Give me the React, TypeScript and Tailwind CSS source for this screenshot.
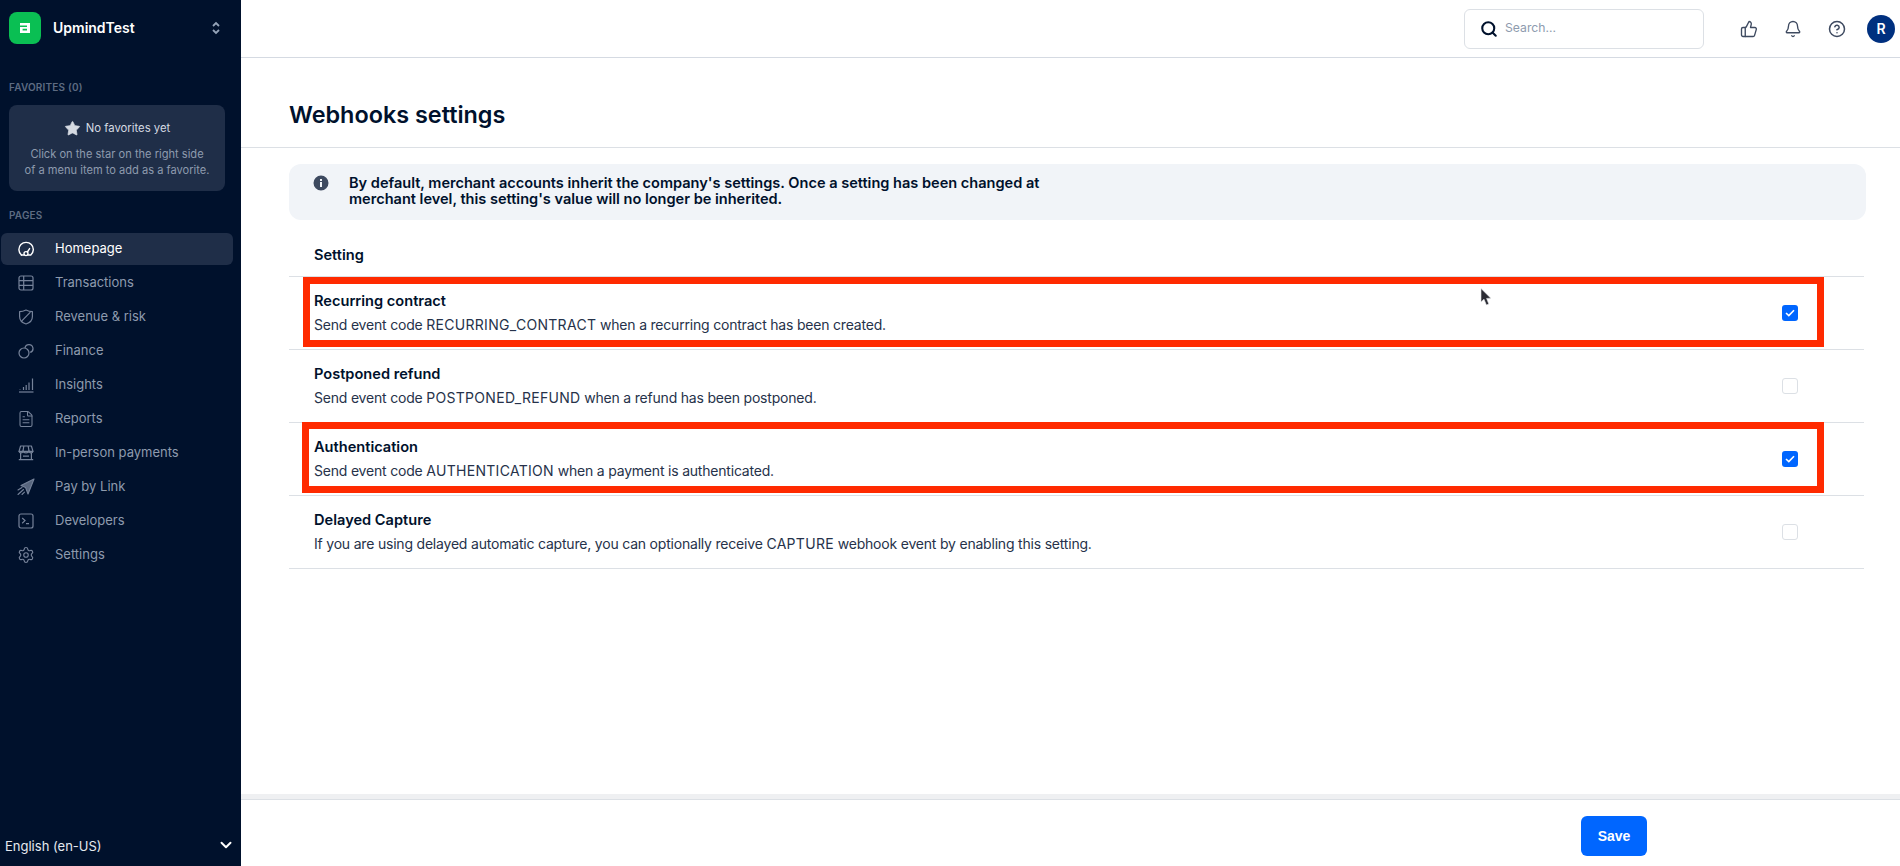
import { Bell, ChevronDown, CircleHelp, FileText, Search, Settings, Star, ThumbsUp } from 'lucide-react';
import type { ReactNode } from 'react';

// ---------------------------------------------------------------------------
// Hand drawn nav icons
// ---------------------------------------------------------------------------

function GaugeIcon() {
  return (
    <svg viewBox="0 0 16 16" className="h-4 w-4" fill="none" stroke="currentColor" strokeWidth="1.4">
      <path d="M3.4 14 A7.2 7.2 0 1 1 12.8 14 L10.2 14" strokeLinecap="round" />
      <circle cx="8" cy="12.6" r="2" />
      <path d="M9.4 11 L11.6 7.6" strokeLinecap="round" />
      <path d="M3.4 14 H5.8" strokeLinecap="round" />
    </svg>
  );
}

function TableIcon() {
  return (
    <svg viewBox="0 0 16 16" className="h-4 w-4" fill="none" stroke="currentColor" strokeWidth="1.2">
      <rect x="1" y="1" width="14" height="14" rx="2" />
      <path d="M1 5.7 H15 M1 10.3 H15 M5.7 1 V15" />
    </svg>
  );
}

function ShieldIcon() {
  return (
    <svg viewBox="0 0 16 16" className="h-4 w-4" fill="none" stroke="currentColor" strokeWidth="1.2">
      <path d="M1.6 2.6 C4 2.6 6 2 8 1 C10 2 12 2.6 14.4 2.6 V7.6 C14.4 11.2 11.6 14 8 15 C4.4 14 1.6 11.2 1.6 7.6 Z" strokeLinejoin="round" />
      <path d="M3.6 12.2 L12.4 3.2" />
    </svg>
  );
}

function FinanceIcon() {
  return (
    <svg viewBox="0 0 16 16" className="h-4 w-4" fill="none" stroke="currentColor" strokeWidth="1.2">
      <circle cx="6" cy="10" r="5" />
      <path d="M7 5.1 A4 4 0 1 1 12.2 9.4" />
    </svg>
  );
}

function InsightsIcon() {
  return (
    <svg viewBox="0 0 16 16" className="h-4 w-4" fill="none" stroke="currentColor" strokeWidth="1.2">
      <path d="M1 15 H15.5" />
      <path d="M2 13 V12.4 M5.5 13 V10 M8.2 13 V8 M11 13 V5.5 M14.5 13 V1.5" />
    </svg>
  );
}

function StoreIcon() {
  return (
    <svg viewBox="0 0 16 16" className="h-4 w-4" fill="none" stroke="currentColor" strokeWidth="1.2">
      <path d="M2.6 1 H13.4 L15 6.4 H1 Z" strokeLinejoin="round" />
      <path d="M5.8 1 L5 6.4 M10.2 1 L11 6.4" />
      <path d="M1 6.4 C1.6 8.4 4.4 8.4 5 6.4 C5.6 8.4 10.4 8.4 11 6.4 C11.6 8.4 14.4 8.4 15 6.4" />
      <path d="M2.6 8 V14.6 H13.4 V8 M0.8 14.6 H15.2 M5 11.2 H11" />
    </svg>
  );
}

function PlaneIcon() {
  return (
    <svg viewBox="0 0 18 18" className="h-[18px] w-[18px] -translate-x-[1px]" fill="none" stroke="currentColor" strokeWidth="1.1">
      <path d="M17 1 L4 7.4 L8.6 9.6 L11 16 Z" fill="currentColor" fillOpacity="0.75" strokeLinejoin="round" />
      <path d="M1 12 L5 9.5 M1 16.5 L6.5 11.5 M5 16.5 L7.5 14.2" strokeLinecap="round" />
    </svg>
  );
}

function TerminalIcon() {
  return (
    <svg viewBox="0 0 16 16" className="h-4 w-4" fill="none" stroke="currentColor" strokeWidth="1.2">
      <rect x="1" y="1" width="14" height="14" rx="2" />
      <path d="M4.2 5 L7 7.6 L4.2 10.2 M8 10.6 H11" />
    </svg>
  );
}

function AdyenMark() {
  return (
    <svg viewBox="0 0 12 12" className="h-3 w-3" fill="#ffffff">
      <path d="M1 1 H11 V11 H1 V5 H8 V3.4 H1 Z M3.6 6.8 V8.6 H8 V6.8 Z" fillRule="evenodd" />
    </svg>
  );
}

// ---------------------------------------------------------------------------
// Sidebar
// ---------------------------------------------------------------------------

const navItems: { label: string; icon: ReactNode; active?: boolean }[] = [
  { label: 'Homepage', icon: <GaugeIcon />, active: true },
  { label: 'Transactions', icon: <TableIcon /> },
  { label: 'Revenue & risk', icon: <ShieldIcon /> },
  { label: 'Finance', icon: <FinanceIcon /> },
  { label: 'Insights', icon: <InsightsIcon /> },
  { label: 'Reports', icon: <FileText className="-ml-[1px] h-[18px] w-[18px]" strokeWidth={1.4} /> },
  { label: 'In-person payments', icon: <StoreIcon /> },
  { label: 'Pay by Link', icon: <PlaneIcon /> },
  { label: 'Developers', icon: <TerminalIcon /> },
  { label: 'Settings', icon: <Settings className="-ml-[1px] h-[18px] w-[18px]" strokeWidth={1.5} /> },
];

function Sidebar() {
  return (
    <aside className="flex h-full w-[241px] shrink-0 flex-col bg-[#00112c]">
      <div className="flex h-[54px] items-center pl-[9px] pr-[20px] pt-[1px]">
        <div className="flex h-8 w-8 items-center justify-center rounded-lg bg-[#0abf53]">
          <AdyenMark />
        </div>
        <span className="ml-3 flex-1 text-sm font-semibold text-white">UpmindTest</span>
        <svg viewBox="0 0 10 14" className="h-[14px] w-[10px]" fill="none" stroke="#94a3b8" strokeWidth="1.8">
          <path d="M2 5 L5 2 L8 5 M2 9 L5 12 L8 9" />
        </svg>
      </div>
      <div className="mt-[26px] pl-[9px] text-[10px] font-semibold leading-[14px] tracking-[0.2px] text-[#5d6b82]">FAVORITES (0)</div>
      <div className="ml-[9px] mt-[11px] flex h-[86px] w-[216px] flex-col items-center rounded-lg bg-[#1f2e48] pt-[13px]">
        <div className="flex items-center gap-[5px] text-[11.3px] leading-[20px] text-[#d5dae2]">
          <Star className="h-[17px] w-[17px] fill-[#d5dae2]" strokeWidth={1} />
          No favorites yet
        </div>
        <p className="mt-[8px] text-center text-[11.1px] leading-[16px] text-[#8e9bae]">
          Click on the star on the right side
          <br />
          of a menu item to add as a favorite.
        </p>
      </div>
      <div className="mt-[17px] pl-[9px] text-[10px] font-semibold leading-[14px] tracking-[0.2px] text-[#5d6b82]">PAGES</div>
      <nav className="ml-[1px] mt-[11px] flex w-[232px] flex-col gap-[2px]">
        {navItems.map((item) => (
          <div
            key={item.label}
            className={
              item.active
                ? 'flex h-8 items-center rounded-md bg-[#1f2e48] pl-[17px] text-[13px] text-white'
                : 'flex h-8 items-center rounded-md pl-[17px] text-[13px] text-[#8e9bae]'
            }
          >
            <span className={item.active ? 'flex w-[37px] text-white' : 'flex w-[37px] text-[#76839a]'}>{item.icon}</span>
            {item.label}
          </div>
        ))}
      </nav>
      <div className="mt-auto flex h-10 items-start justify-between pl-[5px] pr-[6px] pt-[10px] text-[13px] text-[#e5e9ef]">
        <span className="leading-5">English (en-US)</span>
        <ChevronDown className="h-[18px] w-[18px] text-white" strokeWidth={2.6} />
      </div>
    </aside>
  );
}

// ---------------------------------------------------------------------------
// Top bar
// ---------------------------------------------------------------------------

function TopBar() {
  return (
    <header className="flex h-[58px] shrink-0 items-center border-b border-[#d5dae2] pl-[1223px]">
      <div className="flex h-10 w-[240px] items-center rounded-md border border-[#dce0e5] pl-[15px]">
        <Search className="h-[18px] w-[18px] text-[#00112c]" strokeWidth={2.8} />
        <span className="ml-[7px] text-[12.2px] text-[#8e9bae]">Search...</span>
      </div>
      <ThumbsUp className="ml-[36px] h-[18px] w-[18px] text-[#3e4a60]" strokeWidth={1.8} />
      <Bell className="ml-[26px] h-[18px] w-[18px] text-[#3e4a60]" strokeWidth={1.8} />
      <CircleHelp className="ml-[26px] h-[18px] w-[18px] text-[#3e4a60]" strokeWidth={2} />
      <div className="ml-[21px] flex h-7 w-7 items-center justify-center rounded-full bg-[#00307f] text-sm font-semibold text-white">R</div>
    </header>
  );
}

// ---------------------------------------------------------------------------
// Settings table
// ---------------------------------------------------------------------------

interface SettingRow {
  title: string;
  before: string;
  code: string;
  after: string;
  checked: boolean;
  // the two annotation boxes were drawn by hand and don't quite line up
  box?: string;
}

const rows: SettingRow[] = [
  {
    title: 'Recurring contract',
    before: 'Send event code ',
    code: 'RECURRING_CONTRACT',
    after: ' when a recurring contract has been created.',
    checked: true,
    box: 'absolute left-[14px] top-0 h-[70px] w-[1521px] border-[7px] border-[#ff2a00]',
  },
  {
    title: 'Postponed refund',
    before: 'Send event code ',
    code: 'POSTPONED_REFUND',
    after: ' when a refund has been postponed.',
    checked: false,
  },
  {
    title: 'Authentication',
    before: 'Send event code ',
    code: 'AUTHENTICATION',
    after: ' when a payment is authenticated.',
    checked: true,
    box: 'absolute left-[13px] -top-[1px] h-[71px] w-[1522px] border-[7px] border-[#ff2a00]',
  },
  {
    title: 'Delayed Capture',
    before: 'If you are using delayed automatic capture, you can optionally receive ',
    code: 'CAPTURE',
    after: ' webhook event by enabling this setting.',
    checked: false,
  },
];

function Checkbox({ checked }: { checked: boolean }) {
  if (!checked) {
    return <div className="h-4 w-4 rounded-[3px] border border-[#dce0e5] bg-white" />;
  }
  return (
    <div className="flex h-4 w-4 items-center justify-center rounded-[3px] bg-[#0066ff]">
      <svg viewBox="0 0 10 8" className="h-2 w-2.5" fill="none" stroke="#ffffff" strokeWidth="1.6">
        <path d="M1 4 L3.8 6.6 L9 1.2" />
      </svg>
    </div>
  );
}

function Row({ row }: { row: SettingRow }) {
  return (
    <div className="relative flex h-[73px] items-center justify-between border-b border-[#dce0e5] pl-[25px] pr-[66px]">
      <div>
        <div className="text-[14.6px] font-semibold leading-5 text-[#00112c]">{row.title}</div>
        <div className="mt-1 text-sm leading-5 tracking-[-0.2px] text-[#26324a]">
          {row.before}
          <span className="tracking-[0.3px]">{row.code}</span>
          {row.after}
        </div>
      </div>
      <Checkbox checked={row.checked} />
      {/* Red annotation drawn over the screenshot */}
      {row.box && <div className={row.box} />}
    </div>
  );
}

function Cursor() {
  return (
    <svg viewBox="0 0 12 19" className="absolute left-[1239px] top-[140px] h-[19px] w-3" fill="#2b2b33" stroke="#e5e7eb" strokeWidth="0.6">
      <path d="M1 0.5 L1 14 L4 11.2 L6.4 17 L8.8 16 L6.6 10.4 L10.8 10.2 Z" />
    </svg>
  );
}

// ---------------------------------------------------------------------------
// Page
// ---------------------------------------------------------------------------

export default function App() {
  return (
    <div className="flex h-[866px] w-[1900px] overflow-hidden bg-white font-['Inter',sans-serif]">
      <Sidebar />
      <div className="flex min-w-0 flex-1 flex-col">
        <TopBar />
        <div className="flex h-[90px] shrink-0 items-center border-b border-[#dce0e5] pl-[48px] pt-[24px]">
          <h1 className="text-[23.4px] font-semibold text-[#00112c]">Webhooks settings</h1>
        </div>
        <main className="relative flex-1 pl-[48px] pr-[36px] pt-[16px]">
          <div className="flex h-14 w-[1577px] rounded-xl bg-[#f1f4f8] pl-6 pt-[11px]">
            <svg viewBox="0 0 16 16" className="h-4 w-4 shrink-0" fill="#3e4a60">
              <path d="M8 0.5 A7.5 7.5 0 1 1 8 15.5 A7.5 7.5 0 1 1 8 0.5 Z M7 4 V6 H9 V4 Z M7 7 V12 H9 V7 Z" fillRule="evenodd" />
            </svg>
            <p className="ml-[20px] w-[720px] text-[14.56px] font-semibold leading-4 text-[#00112c]">
              By default, merchant accounts inherit the company's settings. Once a setting has been changed at merchant level, this setting's value will no longer be inherited.
            </p>
          </div>
          <div className="w-[1575px]">
            <div className="flex h-[57px] items-center border-b border-[#dce0e5] pl-[25px] pt-[16px] text-[14.6px] font-semibold text-[#00112c]">Setting</div>
            {rows.map((row) => (
              <Row key={row.title} row={row} />
            ))}
          </div>
          <Cursor />
        </main>
        <footer className="flex h-[72px] shrink-0 border-t-[5px] border-[#eff0f2]">
          <div className="flex flex-1 justify-end border-t border-[#dce0e5] pr-[253px] pt-4">
            <button className="h-10 w-[66px] rounded-md bg-[#0066ff] font-['Liberation_Sans',sans-serif] text-sm font-bold text-white">Save</button>
          </div>
        </footer>
      </div>
    </div>
  );
}
